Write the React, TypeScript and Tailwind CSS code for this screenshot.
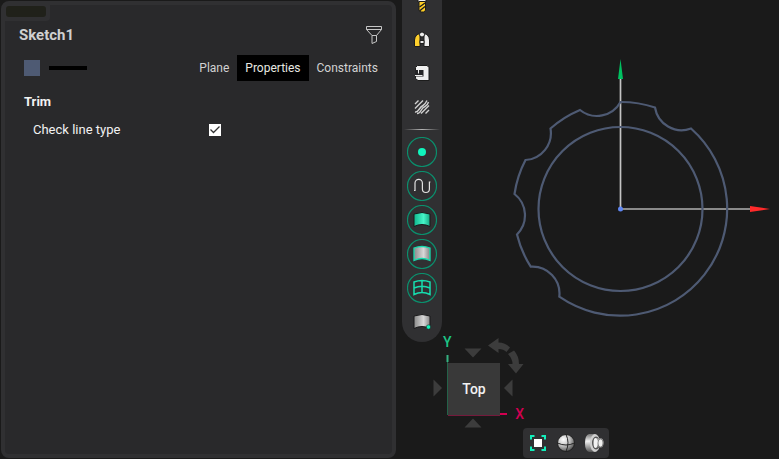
import type { ReactNode } from "react";

function Icon({ children }: { children: ReactNode }) {
  return (
    <svg viewBox="0 0 30 30" className="size-[30px] shrink-0" fill="none" aria-hidden="true">
      {children}
    </svg>
  );
}

function ToolButton({ label, ring = false, children }: { label: string; ring?: boolean; children: ReactNode }) {
  return (
    <button
      type="button"
      aria-label={label}
      className="flex size-[30px] shrink-0 items-center justify-center rounded-full"
    >
      <Icon>
        {ring && <circle cx="15" cy="15" r="14.5" stroke="#0b8f6d" strokeWidth="1.2" />}
        {children}
      </Icon>
    </button>
  );
}

const SURFACE = "M7 9Q15 6 23 9V21.500Q15 17.500 7 21.500Z";

function Toolbar() {
  return (
    <nav
      aria-label="Sketch tools"
      className="flex w-10 shrink-0 flex-col items-center self-start overflow-hidden rounded-b-[20px] bg-[#303032] pb-[5px]"
    >
      <div className="-mt-[10px] flex flex-col gap-1">
        <ToolButton label="Drill">
          <path d="M11 6h8v6h-8z" fill="#f1f1f1" stroke="#1c1c1c" />
          <path d="M12 11.500h6.500v9L16.500 22h-2.500l-2-1.500z" fill="#ffcf26" stroke="#1c1c1c" />
          <path d="M12.500 17l5.500-4M12.500 21l5.500-4.500" stroke="#1c1c1c" strokeWidth="1.400" />
        </ToolButton>
        <ToolButton label="Fillet">
          <path d="M7.500 22.500V16q.5-5.500 5.500-6.500v13z" fill="#ffd02c" stroke="#1c1c1c" />
          <path d="M22.500 22.500V16q-.5-5.500-5.500-6.500v13z" fill="#ececec" stroke="#1c1c1c" />
          <path d="M13 16.500h4v3h-4z" fill="#ececec" stroke="#1c1c1c" />
          <circle cx="15" cy="10.500" r="2.500" fill="#ececec" stroke="#1c1c1c" />
        </ToolButton>
        <ToolButton label="Clamp">
          <path
            d="M10.500 7.500h9.500l2 2V22.500H11l-2.500-2V9.500z"
            fill="#f0f0f0"
            stroke="#1c1c1c"
          />
          <path d="M8 12H16.500v6.500H8z" fill="#252527" />
          <path d="M8 17.500H15.500M11.500 12v3.500" stroke="#ededed" />
        </ToolButton>
        <ToolButton label="Hatch">
          <path
            d="M8 12l3.500-3.500M8 16.500l8-8M8 20q2 .5 4-2.500t4-4T20 8.500M10 21.500q2.500 0 4-3t4-4 3.500-4.500M14 21.500l8-8M18.500 21.500l3.500-3.500"
            stroke="#d0d0d0"
            strokeWidth="1.400"
          />
        </ToolButton>
      </div>
      <hr className="my-[7px] h-px w-9 shrink-0 border-0 bg-gradient-to-r from-transparent via-[#b5b5b5] to-transparent" />
      <div className="flex flex-col gap-1">
        <ToolButton label="Points" ring>
          <circle cx="15" cy="15" r="4" fill="#10f5bd" />
        </ToolButton>
        <ToolButton label="Curves" ring>
          <path
            d="M7 19.500h1V12a3.700 3.700 0 0 1 7.400 0v6a3.500 3.500 0 0 0 7 0V11h1"
            stroke="#e2e2e2"
            strokeWidth="1.200"
          />
        </ToolButton>
        <ToolButton label="Surfaces" ring>
          <defs>
            <linearGradient id="surface-green">
              <stop offset="0" stopColor="#0eb78c" />
              <stop offset=".6" stopColor="#46f5c8" />
              <stop offset="1" stopColor="#15a681" />
            </linearGradient>
            <linearGradient id="surface-gray">
              <stop offset="0" stopColor="#8a8a8a" />
              <stop offset=".6" stopColor="#d8d8d8" />
              <stop offset="1" stopColor="#858585" />
            </linearGradient>
          </defs>
          <path d={SURFACE} fill="url(#surface-green)" stroke="#191a1b" />
        </ToolButton>
        <ToolButton label="Solid edges" ring>
          <path d={SURFACE} fill="url(#surface-gray)" stroke="#16ddae" strokeWidth="1.300" />
        </ToolButton>
        <ToolButton label="Mesh" ring>
          <path
            d={SURFACE + "M7 15Q15 11.500 23 15M15 7.500V19.500"}
            stroke="#16ddae"
            strokeWidth="1.500"
          />
        </ToolButton>
        <ToolButton label="Surface point">
          <path d={SURFACE} fill="url(#surface-gray)" stroke="#19191a" />
          <circle cx="21.500" cy="20" r="2.200" fill="#12f3bb" stroke="#19191a" strokeWidth=".5" />
        </ToolButton>
      </div>
    </nav>
  );
}

function Tab({ children, active = false }: { children: string; active?: boolean }) {
  return (
    <button
      type="button"
      role="tab"
      aria-selected={active}
      className={`h-[26px] px-2 text-[12px] leading-5 ${active ? "bg-black text-[#e8e8e0]" : "text-[#d2d2d2]"}`}
    >
      {children}
    </button>
  );
}

function PropertiesPanel() {
  return (
    <aside className="my-px ml-px mr-1.5 flex w-[395px] shrink-0 flex-col rounded-lg border-4 border-[#303032] bg-[#29292b]">
      <div className="h-4 w-[45px] rounded-br bg-[#303032] px-px pt-px">
        <div className="h-[11px] w-10 rounded-[3px] bg-[#20211a]" />
      </div>
      <header className="flex h-7 items-center justify-between pl-3.5 pr-2.5">
        <h1 className="text-[15px] font-bold leading-5 text-[#d0d0d0]">Sketch1</h1>
        <button type="button" aria-label="Filter">
          <svg viewBox="0 0 16 18" className="h-[18px] w-4" fill="none" stroke="#c6c6c6" aria-hidden="true">
            <path d="M.5.500h15v3l-5 6v6l-4.500 2v-8l-5.500-6z" />
            <path d="M.5 3.500h15M6 9.500h4.500" />
          </svg>
        </button>
      </header>
      <div className="mt-1.5 flex items-center pl-[19px] pr-1.5">
        <button type="button" aria-label="Line color" className="size-4 bg-[#4e5a73]" />
        <button type="button" aria-label="Line style" className="ml-[9px] h-1 w-[38px] bg-black" />
        <div role="tablist" className="ml-auto flex">
          <Tab>Plane</Tab>
          <Tab active>Properties</Tab>
          <Tab>Constraints</Tab>
        </div>
      </div>
      <h2 className="mt-[11px] pl-[19px] text-[13px] font-bold leading-5 text-[#f2f2f2]">Trim</h2>
      <div className="mt-2 flex h-5 items-center pl-7">
        <label htmlFor="check-line" className="w-44 text-[13px] leading-5 text-[#f2f2f2]">
          Check line type
        </label>
        <span className="relative flex size-3">
          <input
            id="check-line"
            type="checkbox"
            defaultChecked
            className="peer size-3 appearance-none bg-white"
          />
          <svg
            viewBox="0 0 12 12"
            className="pointer-events-none absolute inset-0 hidden size-3 peer-checked:block"
            fill="none"
            aria-hidden="true"
          >
            <path d="M1.500 5.500l3 3 6-6" stroke="#333" strokeWidth="1.300" />
          </svg>
        </span>
      </div>
    </aside>
  );
}

function SketchDrawing() {
  return (
    <svg
      viewBox="504 54 270 270"
      className="absolute left-[62px] top-[54px] size-[270px]"
      fill="none"
      role="img"
      aria-label="Sketch profile"
    >
      <path d="M620.500 78V209" stroke="#c4c4c4" strokeWidth="1.700" />
      <path d="M620 209H751" stroke="#b0b0b0" strokeWidth="1.700" />
      <g stroke="#4e5a73" strokeWidth="2.200">
        <circle cx="620.500" cy="209" r="82" />
        <path d="M620.500 102A107 107 0 0 1 655 107.500A27 27 0 0 0 691 128.500A107 107 0 0 1 559.300 296.700A27 27 0 0 0 530.700 266.700A107 107 0 0 1 517 234.500A27 27 0 0 0 514.500 194A107 107 0 0 1 525.500 160A27 27 0 0 0 550.500 128.500A107 107 0 0 1 580 110A27 27 0 0 0 620.500 102Z" />
      </g>
      <path d="M620.500 59L623 79H618z" fill="#00c060" />
      <path d="M770 209L750 206v6z" fill="#ff2a2a" />
      <circle cx="620.500" cy="209" r="2.500" fill="#5f86f2" />
    </svg>
  );
}

function ViewCube() {
  return (
    <div className="absolute bottom-[29px] left-[-9px] grid h-[94px] w-[92px] pl-[15px] pt-[27px]">
      <svg
        viewBox="433 336 92 94"
        className="absolute inset-0 h-[94px] w-[92px]"
        aria-hidden="true"
      >
        <g fill="#3c3c3c">
          <path d="M464.500 348.500h17L473 357.500z" />
          <path d="M464.500 427.500h17L473 418.500z" />
          <path d="M433.500 379.500v17l8.500-8.500z" />
          <path d="M512.500 379.500v17l-8.500-8.500z" />
          <path d="M488 345.500L498.500 338v4.500q6.500 0 11.500 5l-3.500 4.500q-3-3-8-3v4z" />
          <path d="M508 354l6-3.500q5 5.500 5 13.500h4.500l-7.500 9.500-8-9.500h4.500q0-5-4.500-10z" />
        </g>
        <path d="M447.500 355v7" stroke="#35b181" strokeWidth="2" />
        <path d="M447.500 362v53" stroke="#246249" />
        <path d="M448 415.500h52" stroke="#751a3c" />
        <path d="M500 414h7" stroke="#d30050" strokeWidth="2" />
      </svg>
      <span className="absolute left-2.5 top-[-4px] text-[14px] font-medium leading-5 text-[#1cc586]">Y</span>
      <span className="absolute bottom-[6px] right-px text-[14px] font-medium leading-5 text-[#d00050]">X</span>
      <button
        type="button"
        className="relative size-[52px] bg-[#393939] text-[14px] font-medium leading-5 text-[#f2f2f2]"
      >
        Top
      </button>
    </div>
  );
}

function ViewBar() {
  return (
    <div className="absolute bottom-px left-[81px] flex h-[30px] w-[86px] items-center rounded bg-[#303032]">
      <button type="button" aria-label="Fit view" className="size-[30px]">
        <Icon>
          <path d="M8 11.500V8H11.500M18.500 8H22V11.500M22 18.500V22H18.500M11.500 22H8V18.500" stroke="#12efbb" strokeWidth="2" />
          <path d="M11 11h8v8h-8z" fill="#fff" />
        </Icon>
      </button>
      <button type="button" aria-label="Shading" className="-ml-0.5 size-[30px]">
        <Icon>
          <defs>
            <radialGradient id="sphere" cx=".35" cy=".3" r=".75">
              <stop offset="0" stopColor="#fff" />
              <stop offset=".5" stopColor="#c2c2c2" />
              <stop offset="1" stopColor="#4c4c4c" />
            </radialGradient>
          </defs>
          <circle cx="15" cy="15" r="8.500" fill="url(#sphere)" stroke="#202020" />
          <path d="M6.500 15q8.500 4 17 0M15 6.500q4 8 0 17" stroke="#252525" />
        </Icon>
      </button>
      <button type="button" aria-label="Section view" className="-ml-0.5 size-[30px]">
        <Icon>
          <defs>
            <linearGradient id="metal" x1="0" y1="0" x2="0" y2="1">
              <stop offset="0" stopColor="#777" />
              <stop offset=".4" stopColor="#f0f0f0" />
              <stop offset="1" stopColor="#555" />
            </linearGradient>
          </defs>
          <path d="M16 6H10Q6 7 6 15t4 9h6z" fill="url(#metal)" />
          <ellipse cx="16" cy="15" rx="5" ry="9" fill="#cfcfcf" />
          <ellipse cx="17" cy="15" rx="4" ry="6.500" fill="#555" />
          <path d="M16.500 10h4q4-.5 4 5t-4 5h-4z" fill="url(#metal)" />
          <ellipse cx="16.500" cy="15" rx="2" ry="5" fill="#f2f2f2" />
          <ellipse cx="21.500" cy="15" rx="2.500" ry="4" fill="#efefef" stroke="#666" strokeWidth=".7" />
        </Icon>
      </button>
    </div>
  );
}

export default function App() {
  return (
    <div className="flex h-screen overflow-hidden bg-[#1a1a1a] font-[Roboto,sans-serif]">
      <PropertiesPanel />
      <Toolbar />
      <main className="relative min-w-0 flex-1">
        <SketchDrawing />
        <ViewCube />
        <ViewBar />
      </main>
    </div>
  );
}
